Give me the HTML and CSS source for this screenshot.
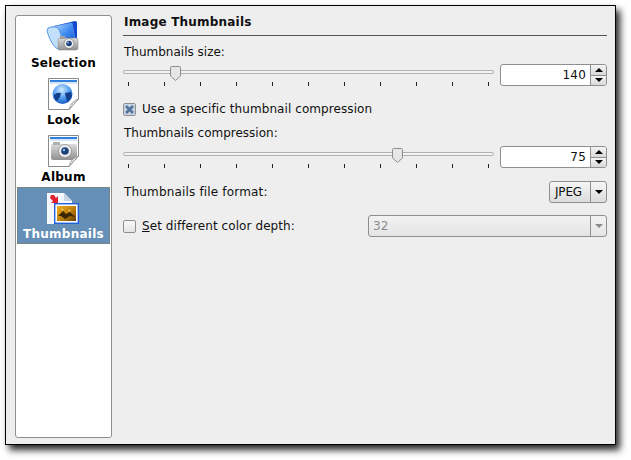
FILE: index.html
```html
<!DOCTYPE html>
<html lang="en">
<head>
    <meta charset="UTF-8">
    <title>Image Thumbnails</title>
    <link rel="stylesheet" href="styles.css">
</head>
<body>
    <div class="window">
        <div class="sidebar">
            <div class="nav-item">
                <svg class="nav-icon" viewBox="0 0 40 34">
                    <defs>
                        <linearGradient id="folderBlue" x1="0" y1="0" x2="1" y2="1">
                            <stop offset="0" stop-color="#cfe6ff"/>
                            <stop offset="0.5" stop-color="#3f8cf0"/>
                            <stop offset="1" stop-color="#0a3fd0"/>
                        </linearGradient>
                        <linearGradient id="camGrey" x1="0" y1="0" x2="0" y2="1">
                            <stop offset="0" stop-color="#dcdcdc"/>
                            <stop offset="1" stop-color="#909090"/>
                        </linearGradient>
                    </defs>
                    <path d="M10 6 L31 1 Q33 1 33 3 L33 20 L20 28 Z" fill="#1048d0"/>
                    <path d="M7 7 L28 3 L31 20 L17 29 L11 24 Z" fill="url(#folderBlue)" stroke="#6ea6ec" stroke-width="0.6"/>
                    <path d="M3 11 Q3 7 7 7 L12 7 Q15 8 16 12 L19 22 L16 30 Q8 28 3 11 Z" fill="#c2e0fb" stroke="#4d8fe6" stroke-width="0.9"/>
                    <rect x="14" y="18" width="20" height="12" rx="2" fill="url(#camGrey)" stroke="#808080" stroke-width="0.5"/>
                    <rect x="16" y="16" width="5" height="3" fill="#a0a0a0"/>
                    <circle cx="25" cy="23.500" r="5" fill="#ececec" stroke="#6a6a6a" stroke-width="0.6"/>
                    <circle cx="25" cy="23.500" r="2.800" fill="#1d3f7a"/>
                    <circle cx="24" cy="22.500" r="0.900" fill="#9cc4f5"/>
                </svg>
                <span>Selection</span>
            </div>
            <div class="nav-item">
                <svg class="nav-icon" viewBox="0 0 40 34">
                    <defs>
                        <radialGradient id="globe" cx="0.45" cy="0.3" r="0.75">
                            <stop offset="0" stop-color="#d4ebff"/>
                            <stop offset="0.55" stop-color="#4f9cf0"/>
                            <stop offset="1" stop-color="#0c4fb8"/>
                        </radialGradient>
                    </defs>
                    <path d="M4.500 1.500 H34.500 V22 L25 32.500 H4.500 Z" fill="#fff" stroke="#8a8a8a"/>
                    <rect x="6" y="3" width="27" height="2" fill="#2f7fe0"/>
                    <rect x="6" y="5" width="27" height="2" fill="#d6e6f8"/>
                    <circle cx="18.500" cy="17" r="10" fill="url(#globe)"/>
                    <path d="M10 18 Q13 15 17 16 L16 20 L13 24 Q10 22 10 18 Z M21 16 L27 15 L28 19 L24 25 L22 21 Z" fill="#123f8c"/>
                    <path d="M25 32.500 Q27 24 34.500 22 L25 32.500 Z" fill="#e4e4e4" stroke="#8a8a8a" stroke-width="0.7"/>
                </svg>
                <span>Look</span>
            </div>
            <div class="nav-item">
                <svg class="nav-icon" viewBox="0 0 40 34">
                    <path d="M4.500 1.500 H34.500 V22 L25 32.500 H4.500 Z" fill="#fff" stroke="#8a8a8a"/>
                    <rect x="6" y="3" width="27" height="2" fill="#2f7fe0"/>
                    <rect x="6" y="5" width="27" height="2" fill="#d6e6f8"/>
                    <rect x="7" y="10" width="26" height="16" rx="2" fill="url(#camGrey)"/>
                    <rect x="9" y="8" width="7" height="3" fill="#b0b0b0"/>
                    <circle cx="21" cy="17" r="6.500" fill="#eee" stroke="#777" stroke-width="0.6"/>
                    <circle cx="21" cy="17" r="3.800" fill="#1d3f7a"/>
                    <circle cx="20" cy="16" r="1.200" fill="#8fbcf0"/>
                    <path d="M25 32.500 Q27 24 34.500 22 L25 32.500 Z" fill="#e4e4e4" stroke="#8a8a8a" stroke-width="0.7"/>
                </svg>
                <span>Album</span>
            </div>
            <div class="nav-item active">
                <svg class="nav-icon" viewBox="0 0 40 34">
                    <defs>
                        <linearGradient id="photo" x1="0" y1="0" x2="1" y2="1">
                            <stop offset="0" stop-color="#f0b020"/>
                            <stop offset="0.6" stop-color="#b87808"/>
                            <stop offset="1" stop-color="#5a3a04"/>
                        </linearGradient>
                    </defs>
                    <path d="M3 2 H20 L28 10 V33 H3 Z" fill="#f6f8fc"/>
                    <path d="M20 2 V10 H28 Z" fill="#c8d2e2"/>
                    <path d="M7 4 L10 4 L12 7 L14 5 V12 H7 L9 10 L6 7 Z" fill="#e0202c"/>
                    <rect x="10.700" y="12.700" width="23.600" height="19.600" fill="#fff" stroke="#1f5fd8" stroke-width="1.400"/>
                    <rect x="13" y="15" width="19" height="15" fill="url(#photo)"/>
                    <path d="M14 25 L19 20 L22 23 L26 21 L31 26 L26 25 L21 28 L17 25 Z" fill="#3a2604"/>
                    <path d="M17 19 l1.500 -1.500 l1 1.500 z M24 20 l1.500 -1.500 l1 1.500 z" fill="#ffe8a0"/>
                </svg>
                <span>Thumbnails</span>
            </div>
        </div>

        <div class="main">
            <div class="heading">Image Thumbnails</div>

            <div class="label label-first">Thumbnails size:</div>
            <div class="slider-row">
                <div class="slider">
                    <div class="track"></div>
                    <svg class="thumb" style="left: 12.7%" viewBox="0 0 11 15">
                        <path d="M1.500 0.500 H9.500 Q10.500 0.500 10.500 1.500 V10 L5.500 14.500 L0.500 10 V1.500 Q0.500 0.500 1.500 0.500 Z" fill="#e6e6e6" stroke="#8e8e8e"/>
                    </svg>
                    <div class="ticks">
                        <i></i><i></i><i></i><i></i><i></i><i></i><i></i><i></i><i></i><i></i><i></i>
                    </div>
                </div>
                <div class="spin">
                    <div class="spin-value">140</div>
                    <div class="spin-buttons">
                        <div class="spin-btn"><b class="arrow-up"></b></div>
                        <div class="spin-btn"><b class="arrow-down"></b></div>
                    </div>
                </div>
            </div>

            <div class="check-row check-row-first">
                <div class="checkbox checked">
                    <svg viewBox="0 0 13 13">
                        <rect x="1" y="1" width="11" height="11" fill="#c9d4e2"/>
                        <path d="M3 3 L10 10 M10 3 L3 10" stroke="#54749c" stroke-width="2.800"/>
                    </svg>
                </div>
                <span>Use a specific thumbnail compression</span>
            </div>

            <div class="label label-second">Thumbnails compression:</div>
            <div class="slider-row slider-row-second">
                <div class="slider">
                    <div class="track"></div>
                    <svg class="thumb" style="left: 72.5%" viewBox="0 0 11 15">
                        <path d="M1.500 0.500 H9.500 Q10.500 0.500 10.500 1.500 V10 L5.500 14.500 L0.500 10 V1.500 Q0.500 0.500 1.500 0.500 Z" fill="#e6e6e6" stroke="#8e8e8e"/>
                    </svg>
                    <div class="ticks">
                        <i></i><i></i><i></i><i></i><i></i><i></i><i></i><i></i><i></i><i></i><i></i>
                    </div>
                </div>
                <div class="spin">
                    <div class="spin-value">75</div>
                    <div class="spin-buttons">
                        <div class="spin-btn"><b class="arrow-up"></b></div>
                        <div class="spin-btn"><b class="arrow-down"></b></div>
                    </div>
                </div>
            </div>

            <div class="format-row">
                <span class="format-label">Thumbnails file format:</span>
                <div class="combo combo-format">
                    <div class="combo-text">JPEG</div>
                    <div class="combo-btn"><b class="arrow-down"></b></div>
                </div>
            </div>

            <div class="depth-row">
                <div class="depth-check">
                    <div class="checkbox"></div>
                    <span><u>S</u>et different color depth:</span>
                </div>
                <div class="combo combo-depth">
                    <div class="combo-text">32</div>
                    <div class="combo-btn"><b class="arrow-down"></b></div>
                </div>
            </div>
        </div>
    </div>
</body>
</html>
```

FILE: styles.css
```css
html, body {
    margin: 0;
    padding: 0;
    background-color: #fff;
}
body {
    font-family: "DejaVu Sans", sans-serif;
    font-size: 12px;
    color: #111;
    padding: 5px;
    height: 460px;
    box-sizing: border-box;
    overflow: hidden;
}
.window {
    width: 611px;
    height: 440px;
    box-sizing: border-box;
    border: 1px solid #000;
    background-color: #eeeeee;
    box-shadow: 4px 5px 7px rgba(0,0,0,0.85);
    padding: 9px 8px 6px 9px;
    display: flex;
    gap: 11px;
}
.sidebar {
    width: 97px;
    flex-shrink: 0;
    box-sizing: border-box;
    background-color: #fff;
    border: 1px solid #8f8f8f;
    border-radius: 3px;
    padding: 0 1px;
}
.nav-item {
    height: 57px;
    display: flex;
    flex-direction: column;
    align-items: center;
    font-weight: bold;
    font-size: 12px;
    letter-spacing: 0.25px;
    color: #000;
    padding-top: 4px;
    box-sizing: border-box;
}
.nav-item span {
    line-height: 16px;
    margin-top: 1px;
}
.nav-icon {
    width: 40px;
    height: 34px;
    display: block;
}
.active {
    background-color: #668fb7;
    color: #fff;
    outline: 1px dotted #8b7a5a;
    outline-offset: -1px;
}
.main {
    flex: 1;
    min-width: 0;
}
.heading {
    height: 21px;
    line-height: 14px;
    font-weight: bold;
    font-size: 12px;
    letter-spacing: 0.2px;
    padding-left: 1px;
    box-sizing: border-box;
    border-bottom: 1px solid #555;
}
.label {
    height: 16px;
    line-height: 16px;
    padding-left: 1px;
}
.label-first {
    margin-top: 8px;
}
.label-second {
    margin-top: 8px;
}
.slider-row {
    margin-top: 4px;
    display: grid;
    grid-template-columns: 1fr 107px;
    gap: 6px;
    height: 22px;
}
.slider-row-second {
    margin-top: 5px;
}
.slider {
    position: relative;
    height: 22px;
}
.track {
    position: absolute;
    left: 0;
    right: 0;
    top: 6px;
    height: 4px;
    box-sizing: border-box;
    background-color: #f4f4f4;
    border: 1px solid #b0b0b0;
    border-radius: 2px;
}
.thumb {
    position: absolute;
    top: 2px;
    width: 11px;
    height: 15px;
}
.ticks {
    position: absolute;
    left: 5px;
    right: 5px;
    top: 18px;
    display: flex;
    justify-content: space-between;
}
.ticks i {
    display: block;
    width: 1px;
    height: 4px;
    background-color: #222;
}
.spin {
    display: flex;
    height: 22px;
    box-sizing: border-box;
    border: 1px solid #8f8f8f;
    border-radius: 3px;
    background-color: #fff;
    overflow: hidden;
}
.spin-value {
    flex: 1;
    text-align: right;
    line-height: 21px;
    padding-right: 4px;
    letter-spacing: 0.2px;
}
.spin-buttons {
    width: 15px;
    display: flex;
    flex-direction: column;
    border-left: 1px solid #8f8f8f;
}
.spin-btn {
    flex: 1;
    display: flex;
    align-items: center;
    justify-content: center;
    background: linear-gradient(#f4f4f4, #d8d8d8);
}
.spin-btn + .spin-btn {
    border-top: 1px solid #8f8f8f;
}
.arrow-up {
    width: 0;
    height: 0;
    border-left: 4px solid transparent;
    border-right: 4px solid transparent;
    border-bottom: 4px solid #000;
}
.arrow-down {
    width: 0;
    height: 0;
    border-left: 4px solid transparent;
    border-right: 4px solid transparent;
    border-top: 4px solid #000;
}
.check-row {
    display: flex;
    align-items: center;
    gap: 6px;
    height: 16px;
    letter-spacing: 0.08px;
}
.check-row-first {
    margin-top: 15px;
}
.checkbox {
    width: 13px;
    height: 13px;
    box-sizing: border-box;
    border: 1px solid #8f8f8f;
    border-radius: 2px;
    background: linear-gradient(#fafafa, #e4e4e4);
    flex-shrink: 0;
    position: relative;
}
.checkbox svg {
    position: absolute;
    left: -1px;
    top: -1px;
    width: 13px;
    height: 13px;
}
.format-row {
    margin-top: 13px;
    height: 22px;
    display: flex;
    align-items: center;
    justify-content: space-between;
}
.format-label {
    padding-left: 1px;
    letter-spacing: 0.17px;
}
.depth-row {
    margin-top: 12px;
    height: 22px;
    display: flex;
    align-items: center;
}
.depth-check {
    width: 245px;
    display: flex;
    align-items: center;
    gap: 6px;
    letter-spacing: 0.08px;
}
.combo {
    display: flex;
    height: 22px;
    box-sizing: border-box;
    border: 1px solid #8f8f8f;
    border-radius: 3px;
    background: linear-gradient(#f6f6f6, #dcdcdc);
    overflow: hidden;
}
.combo-format {
    width: 58px;
}
.combo-depth {
    flex: 1;
    color: #8a8a8a;
    background: linear-gradient(#f2f2f2, #e4e4e4);
}
.combo-text {
    flex: 1;
    line-height: 20px;
    padding-left: 4px;
}
.combo-format .combo-text {
    padding-left: 5px;
    letter-spacing: -0.2px;
}
.combo-btn {
    width: 15px;
    display: flex;
    align-items: center;
    justify-content: center;
    border-left: 1px solid #8f8f8f;
}
.combo-depth .arrow-down {
    border-top-color: #8a8a8a;
}
```
